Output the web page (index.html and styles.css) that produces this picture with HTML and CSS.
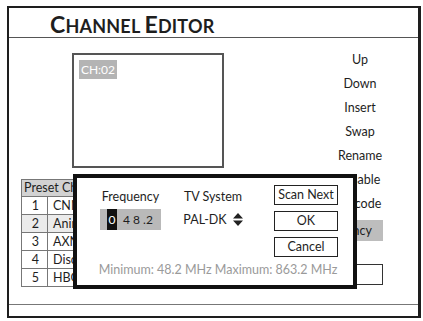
FILE: index.html
```html
<!DOCTYPE html>
<html lang="en">
<head>
    <meta charset="UTF-8">
    <title>Channel Editor</title>
    <link rel="stylesheet" href="styles.css">
</head>
<body>
    <div class="frame">
        <div class="header">
            <div class="title"><span class="cap">C</span>HANNEL <span class="cap">E</span>DITOR</div>
        </div>
        <div class="main">
            <div class="left">
                <div class="preview">
                    <span class="ch-tag">CH:02</span>
                </div>
                <table class="presets">
                    <thead>
                        <tr><th colspan="2">Preset Channel</th></tr>
                    </thead>
                    <tbody>
                        <tr><td class="num">1</td><td>CNN</td></tr>
                        <tr class="sel"><td class="num">2</td><td>Animal</td></tr>
                        <tr><td class="num">3</td><td>AXN</td></tr>
                        <tr><td class="num">4</td><td>Disc</td></tr>
                        <tr><td class="num">5</td><td>HBO</td></tr>
                    </tbody>
                </table>
            </div>
            <div class="menu">
                <div class="menu-item">Up</div>
                <div class="menu-item">Down</div>
                <div class="menu-item">Insert</div>
                <div class="menu-item">Swap</div>
                <div class="menu-item">Rename</div>
                <div class="menu-item">Disable</div>
                <div class="menu-item">Decode</div>
                <div class="menu-item active"><span>Frequency</span></div>
                <div class="menu-box"></div>
            </div>

            <div class="dialog">
                <div class="dlg-top">
                    <div class="field freq">
                        <div class="label">Frequency</div>
                        <div class="freq-input"><span class="cursor">0</span><span class="digits">4 8 .2</span></div>
                    </div>
                    <div class="field tv">
                        <div class="label">TV System</div>
                        <div class="tv-value">
                            <span>PAL-DK</span>
                            <svg class="updown" width="10" height="13" viewBox="0 0 10 13">
                                <path d="M0 5.5 L5 0 L10 5.5 Z M0 7.5 L10 7.5 L5 13 Z" fill="#222"/>
                            </svg>
                        </div>
                    </div>
                    <div class="btns">
                        <div class="btn">Scan Next</div>
                        <div class="btn">OK</div>
                        <div class="btn">Cancel</div>
                    </div>
                </div>
                <div class="range">Minimum: 48.2 MHz Maximum: 863.2 MHz</div>
            </div>
        </div>
        <div class="footer"></div>
    </div>
</body>
</html>
```

FILE: styles.css
```css
body {
    margin: 0;
    background: #fff;
    font-family: Lato, "Open Sans", sans-serif;
    color: #1e1e1e;
}

.frame {
    margin: 6px 0 0 7px;
    width: 414px;
    height: 312px;
    box-sizing: border-box;
    border: 2px solid #1e1e1e;
    border-right-width: 3px;
    display: flex;
    flex-direction: column;
}

.header {
    height: 30px;
    box-sizing: border-box;
    border-bottom: 1px solid #555;
    padding-left: 41px;
}

.title {
    font-size: 18px;
    font-weight: 700;
    line-height: 26px;
    padding-top: 3px;
    letter-spacing: 0.2px;
}

.title .cap {
    font-size: 23px;
}

.main {
    position: relative;
    height: 266px;
    display: flex;
}

.left {
    flex: 1;
}

.preview {
    margin: 15px 0 0 63px;
    width: 152px;
    height: 115px;
    box-sizing: border-box;
    border: 2px solid #555;
    padding: 3px 0 0 5px;
}

.ch-tag {
    display: inline-block;
    width: 38px;
    height: 19px;
    line-height: 19px;
    text-align: center;
    background: #b4b4b4;
    color: #fff;
    font-size: 12px;
}

.presets {
    margin: 11px 0 0 12px;
    border-collapse: collapse;
    font-size: 12.5px;
    width: 170px;
}

.presets th {
    background: #d2d2d2;
    border: 1px solid #777;
    height: 16px;
    padding: 0 0 0 2px;
    text-align: left;
    font-weight: 400;
    line-height: 14px;
}

.presets td {
    border: 1px solid #777;
    height: 17px;
    padding: 0 0 0 5px;
    line-height: 16px;
}

.presets td.num {
    width: 17px;
    text-align: right;
    padding: 0 8px 0 0;
}

.presets tr.sel td {
    background: #ebebeb;
}

.menu {
    width: 60px;
    margin-right: 28px;
    padding-top: 10px;
    font-size: 12.5px;
}

.menu-item {
    line-height: 24px;
    text-align: center;
    white-space: nowrap;
}

.menu-item.active {
    margin: 4px 7px 0 0;
    height: 21px;
    line-height: 21px;
    background: #bdbdbd;
    display: flex;
    justify-content: flex-end;
    padding-right: 11px;
}

.menu-box {
    margin: 23px 7px 0 7px;
    height: 21px;
    box-sizing: border-box;
    border: 1.5px solid #333;
}

.dialog {
    position: absolute;
    left: 64px;
    top: 136px;
    width: 284px;
    height: 115px;
    box-sizing: border-box;
    border: 4px solid #111;
    background: #fff;
    font-size: 12.5px;
}

.dlg-top {
    display: flex;
    padding-top: 7px;
}

.field {
    display: flex;
    flex-direction: column;
    align-items: center;
}

.field .label {
    margin-top: 4px;
    line-height: 16px;
    white-space: nowrap;
}

.freq {
    margin-left: 23px;
    width: 61px;
}

.freq-input {
    margin-top: 4px;
    width: 61px;
    height: 21px;
    background: #b9b9b9;
    display: flex;
    align-items: center;
    font-size: 12px;
}

.cursor {
    margin-left: 7px;
    width: 10px;
    height: 21px;
    line-height: 21px;
    text-align: center;
    background: #111;
    color: #fff;
}

.digits {
    margin-left: 6px;
    white-space: pre;
}

.tv {
    margin-left: 17px;
    width: 70px;
}

.tv-value {
    margin-top: 4px;
    height: 21px;
    display: flex;
    align-items: center;
    gap: 6px;
    white-space: nowrap;
}

.btns {
    margin-left: 26px;
    width: 64px;
    display: flex;
    flex-direction: column;
    gap: 6px;
}

.btn {
    height: 20px;
    box-sizing: border-box;
    border: 1.5px solid #222;
    line-height: 17px;
    text-align: center;
    white-space: nowrap;
}

.range {
    margin-top: 5px;
    line-height: 16px;
    text-align: center;
    color: #9a9a9a;
    padding-left: 6px;
}

.footer {
    flex: 1;
    border-top: 1px solid #777;
}
```
